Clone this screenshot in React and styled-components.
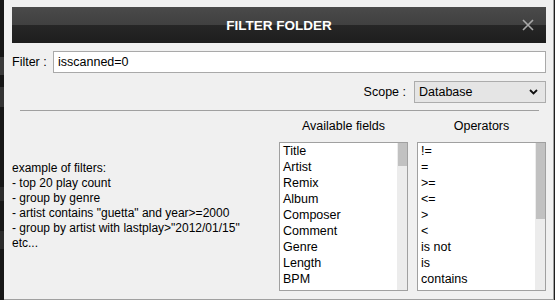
import React from 'react'
import styled, { createGlobalStyle } from 'styled-components'

const GlobalStyle = createGlobalStyle`
html, body {
  margin: 0;
  padding: 0;
  background: #151515;
  font-family: "Liberation Sans", Arial, sans-serif;
}
`

const Screen = styled.div`
display: flex;
width: 555px;
height: 300px;
overflow: hidden;
`

const Backdrop = styled.div`
width: 4px;
display: flex;
flex-direction: column;
background: #161616;
`

const Chip = styled.div`
height: ${p => p.h}px;
margin-top: ${p => p.top}px;
background: ${p => p.color};
`

const Dialog = styled.div`
flex: 1;
display: flex;
flex-direction: column;
background: #f0f0f0;
border-right: 1px solid #a0a0a0;
border-bottom: 1px solid #a0a0a0;
padding: 7px 7px 0 8px;
color: #000;
font-size: 12px;
`

const EdgeShadow = styled.div`
width: 1px;
background: #1e1e1e;
`

const TitleBar = styled.div`
height: 36px;
position: relative;
display: flex;
align-items: center;
justify-content: center;
background: linear-gradient(#4a4a4a 0%, #404040 50%, #262626 50%, #1d1d1d 100%);
`

const Title = styled.span`
color: #fff;
font-weight: bold;
font-size: 13.5px;
letter-spacing: 0;
`

const Close = styled.svg`
position: absolute;
right: 12px;
top: 12px;
`

const Row = styled.div`
display: flex;
align-items: center;
justify-content: ${p => (p.end ? 'flex-end' : 'flex-start')};
margin-top: 8px;
`

const Label = styled.span`
width: ${p => p.w}px;
font-size: 12.5px;
`

const TextBox = styled.div`
flex: 1;
height: 22px;
box-sizing: border-box;
background: #fff;
border: 1px solid #a9a9a9;
display: flex;
align-items: center;
padding-left: 4px;
font-size: 12.5px;
`

const Select = styled.div`
width: 132px;
height: 22px;
box-sizing: border-box;
margin-left: 8px;
background: #e5e5e5;
border: 1px solid #acacac;
display: flex;
align-items: center;
justify-content: space-between;
padding: 0 7px 0 4px;
font-size: 12.5px;
`

const Separator = styled.div`
height: 1px;
background: #a0a0a0;
margin: 7px 7px 0 8px;
`

const Body = styled.div`
flex: 1;
display: flex;
margin-top: 7px;
`

const Examples = styled.div`
width: 267px;
display: flex;
flex-direction: column;
justify-content: center;
line-height: 15px;
font-size: 12px;
padding-bottom: 6px;
`

const Column = styled.div`
width: 129px;
margin-left: ${p => p.gap}px;
display: flex;
flex-direction: column;
`

const Heading = styled.div`
height: 16px;
line-height: 16px;
text-align: center;
font-size: 12.5px;
margin-bottom: 8px;
`

const ListBox = styled.div`
height: 149px;
box-sizing: border-box;
border: 1px solid #a0a0a0;
background: #fff;
display: flex;
overflow: hidden;
`

const Items = styled.div`
flex: 1;
padding-left: 3px;
overflow: hidden;
`

const Item = styled.div`
height: 16px;
line-height: 16px;
font-size: 12.5px;
white-space: nowrap;
`

const Track = styled.div`
width: 10px;
background: #ececec;
`

const Thumb = styled.div`
width: 9px;
margin-left: 1px;
background: #c1c1c1;
`

const fields = ['Title', 'Artist', 'Remix', 'Album', 'Composer', 'Comment', 'Genre', 'Length', 'BPM', 'Key']
const operators = ['!=', '=', '>=', '<=', '>', '<', 'is not', 'is', 'contains', "doesn't contain"]

function List({ items, thumb }) {
    return (
        <ListBox>
            <Items>
                {items.map(i => <Item key={i}>{i}</Item>)}
            </Items>
            <Track>
                <Thumb style={{ height: thumb }} />
            </Track>
        </ListBox>
    )
}

export default function App() {
    return (
        <Screen>
            <GlobalStyle />
            <Backdrop>
                <Chip top={57} h={18} color="#3a3a3a" />
                <Chip top={12} h={20} color="#333" />
                <Chip top={80} h={14} color="#2b2b2b" />
                <Chip top={30} h={18} color="#2a2a2a" />
            </Backdrop>
            <Dialog>
                <TitleBar>
                    <Title>FILTER FOLDER</Title>
                    <Close width="12" height="12" viewBox="0 0 12 12">
                        <path d="M1 1 L11 11 M11 1 L1 11" stroke="#a9a9a9" strokeWidth="1.6" />
                    </Close>
                </TitleBar>
                <Row>
                    <Label w={41}>Filter :</Label>
                    <TextBox>isscanned=0</TextBox>
                </Row>
                <Row end>
                    <span style={{ fontSize: '12.5px' }}>Scope :</span>
                    <Select>
                        <span>Database</span>
                        <svg width="9" height="6" viewBox="0 0 9 6">
                            <path d="M1 1 L4.5 4.5 L8 1" stroke="#111" strokeWidth="1.8" fill="none" />
                        </svg>
                    </Select>
                </Row>
                <Separator />
                <Body>
                    <Examples>
                        <div>example of filters:</div>
                        <div>- top 20 play count</div>
                        <div>- group by genre</div>
                        <div>- artist contains "guetta" and year&gt;=2000</div>
                        <div>- group by artist with lastplay&gt;"2012/01/15"</div>
                        <div>etc...</div>
                    </Examples>
                    <Column gap={0}>
                        <Heading>Available fields</Heading>
                        <List items={fields} thumb={23} />
                    </Column>
                    <Column gap={9}>
                        <Heading>Operators</Heading>
                        <List items={operators} thumb={76} />
                    </Column>
                </Body>
            </Dialog>
            <EdgeShadow />
        </Screen>
    )
}
